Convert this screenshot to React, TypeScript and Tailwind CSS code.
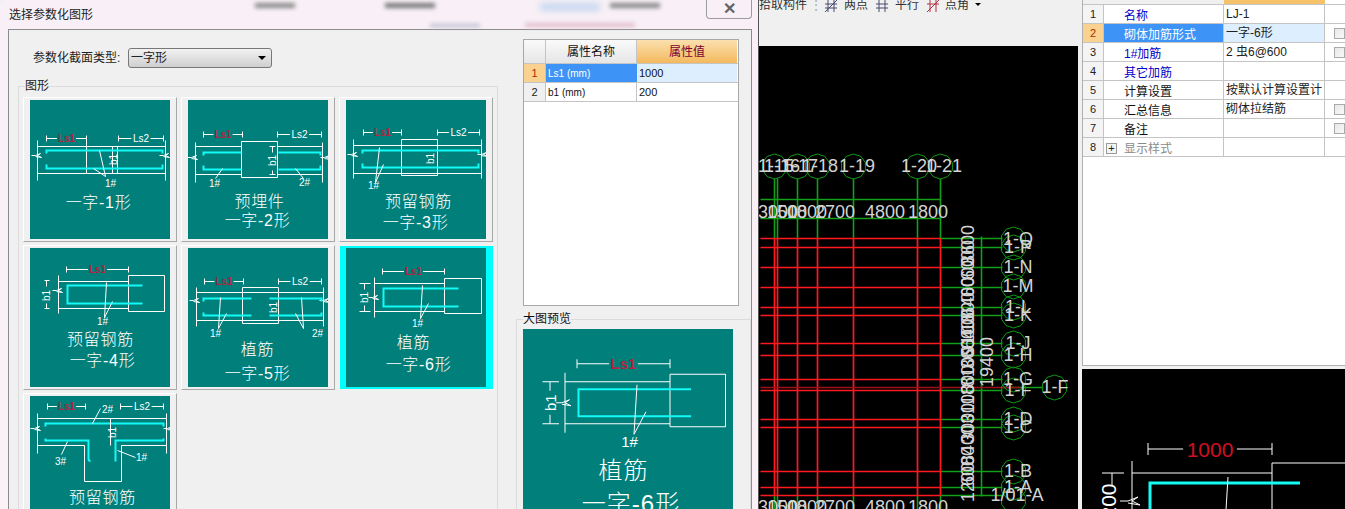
import React from "react";

const WHITE = "#ffffff";
const RED = "#b02440";
const CYAN = "#14fbf5";

function L({ d, c = WHITE, w = 1 }: { d: string; c?: string; w?: number }) {
  return <path d={d} fill="none" stroke={c} strokeWidth={w} vectorEffect="non-scaling-stroke" />;
}

function T({ x, y, s = 10, c = WHITE, rot, bold, children }: { x: number; y: number; s?: number; c?: string; rot?: boolean; bold?: boolean; children: React.ReactNode }) {
  return (
    <text
      x={x}
      y={y}
      fontSize={s}
      fill={c}
      fontWeight={bold ? 700 : undefined}
      textAnchor="middle"
      dominantBaseline="central"
      transform={rot ? `rotate(-90 ${x} ${y})` : undefined}
    >
      {children}
    </text>
  );
}

// dimension line with ticks and a label in the gap
function Dim({ a, b, y, label, red, s = 10 }: { a: number; b: number; y: number; label: string; red?: boolean; s?: number }) {
  const m = (a + b) / 2;
  const g = label.length * s * 0.32;
  return (
    <g>
      <L d={`M${a} ${y - 3}V${y + 3}M${b} ${y - 3}V${y + 3}M${a} ${y}H${m - g}M${m + g} ${y}H${b}`} />
      <T x={m} y={y} s={s} c={red ? RED : WHITE} bold={red}>{label}</T>
    </g>
  );
}

function Brk({ x, y }: { x: number; y: number }) {
  return <L d={`M${x - 5} ${y}H${x - 1}L${x + 4} ${y - 2}L${x + 1} ${y}L${x + 5} ${y + 2}L${x - 1} ${y + 1}`} />;
}

function Cap({ lines }: { lines: [string, number, number][] }) {
  return (
    <g letterSpacing={0.7} fontWeight={300}>
      {lines.map(([t, cx, cy]) => (
        <T key={t} x={cx} y={cy} s={16}>{t}</T>
      ))}
    </g>
  );
}

function D1() {
  return (
    <>
      <Dim a={16} b={56} y={38} label="Ls1" red />
      <Dim a={88} b={133} y={38} label="Ls2" />
      <L d="M7 46H135M7 73H135M7 40V80M135 40V80M56 36V73M82 46V73M87 46V73" />
      <Brk x={6} y={55} /><Brk x={134} y={55} />
      <L c={CYAN} w={2} d="M16 53V50H132V53M16 64V68H132V64" />
      <L d="M69 50L75 76L63 68" />
      <T x={80} y={83}>1#</T>
      <T x={83} y={59} rot>b1</T>
      <Cap lines={[["一字-1形", 68, 102]]} />
    </>
  );
}

function D2() {
  return (
    <>
      <Dim a={15} b={54} y={34} label="Ls1" red />
      <Dim a={89} b={133} y={34} label="Ls2" />
      <L d="M53 41H89V77H53ZM7 46H53M89 46H134M7 74H53M89 74H134M7 42V82M134 42V82" />
      <Brk x={4} y={57} /><Brk x={137} y={57} />
      <L c={CYAN} w={2} d="M15 55V52H53M15 65V69H53M132 55V52H90M132 65V69H90" />
      <L d="M34 68L27 78M107 68L115 78M81 46H87M81 74H87M84 46V52M84 70V74" />
      <T x={26} y={83}>1#</T><T x={116} y={82}>2#</T>
      <T x={84} y={60} rot>b1</T>
      <Cap lines={[["预埋件", 71, 101], ["一字-2形", 69, 120]]} />
    </>
  );
}

function D3() {
  return (
    <>
      <Dim a={17} b={55} y={32} label="Ls1" red />
      <Dim a={91} b={133} y={32} label="Ls2" />
      <L d="M55 39H91V75H55ZM7 45H135M7 73H135M7 39V78M135 39V78" />
      <Brk x={6} y={54} /><Brk x={136} y={54} />
      <L c={CYAN} w={2} d="M16 53V50H132V53M16 63V67H132V63" />
      <L d="M33 47L29 82L37 64" />
      <T x={27} y={85}>1#</T>
      <T x={84} y={58} rot>b1</T>
      <Cap lines={[["预留钢筋", 72, 101], ["一字-3形", 69, 122]]} />
    </>
  );
}

function D4() {
  return (
    <>
      <Dim a={36} b={98} y={21} label="Ls1" red />
      <L d="M98 27H134V63H98ZM28 33H98M28 60H98M28 27V65M14 32H19M14 60H19M16 32V38M16 55V60" />
      <Brk x={27} y={42} />
      <L c={CYAN} w={2} d="M112 37H37V55H112" />
      <L d="M76 34L74 69L82 53" />
      <T x={72} y={73}>1#</T>
      <T x={16} y={47} rot>b1</T>
      <Cap lines={[["预留钢筋", 70, 91], ["一字-4形", 72, 112]]} />
    </>
  );
}

function D5() {
  return (
    <>
      <Dim a={16} b={55} y={33} label="Ls1" red />
      <Dim a={90} b={133} y={33} label="Ls2" />
      <L d="M54 39H90V75H54ZM8 44H135M8 72H135M8 39V78M135 39V78" />
      <Brk x={6} y={52} /><Brk x={136} y={52} />
      <L c={CYAN} w={2} d="M15 53V50H63M15 64V67H63M133 53V50H81M133 64V67H81" />
      <L d="M32 49L30 80L38 65M113 49L115 80L107 65" />
      <T x={27} y={85}>1#</T><T x={129} y={85}>2#</T>
      <T x={85} y={59} rot>b1</T>
      <Cap lines={[["植筋", 69, 101], ["一字-5形", 69, 125]]} />
    </>
  );
}

function D6({ ls = "Ls1", bt = "b1", caption = true, s = 10, redC, bx = 18, cw = 2, bold = true }: { ls?: string; bt?: string; caption?: boolean; s?: number; redC?: string; bx?: number; cw?: number; bold?: boolean }) {
  const m = 67;
  const g = ls.length * s * 0.32;
  return (
    <>
      <L d={`M36 20V26M98 20V26M36 23H${m - g}M${m + g} 23H98`} />
      <T x={m} y={23} s={s} c={redC ?? RED} bold={bold}>{ls}</T>
      <L d="M98 30H135V65H98ZM28 35H98M28 63H98M28 29V69M13 35H24M13 63H24M18 35V41M18 57V63" />
      <Brk x={27} y={49} />
      <L c={CYAN} w={cw} d="M112 40H37V58H112" />
      <L d="M76 37L74 70L82 55" />
      <T x={71} y={75}>1#</T>
      <T x={bx} y={49} s={s} rot>{bt}</T>
      {caption && <Cap lines={[["植筋", 67, 94], ["一字-6形", 72, 116]]} />}
    </>
  );
}

function D7() {
  return (
    <>
      <Dim a={17} b={55} y={10} label="Ls1" red />
      <Dim a={90} b={133} y={10} label="Ls2" />
      <L d="M7 22H136M7 49H54V85H91V49H136M7 17V57M136 17V57" />
      <Brk x={5} y={32} /><Brk x={138} y={32} />
      <L c={CYAN} w={2} d="M15 30V27H133V30M15 42V44H58V62Q58 65 60 64M133 42V44H85V65" />
      <L d="M62 27L70 12M37 45L31 58M87 54L105 61M80 22V49" />
      <T x={77} y={13}>2#</T><T x={30} y={65}>3#</T><T x={111} y={61}>1#</T>
      <T x={82} y={36} rot>b1</T>
      <Cap lines={[["预留钢筋", 72, 101], ["一字-7形", 72, 122]]} />
    </>
  );
}

const cards = [D1, D2, D3, D4, D5, D6, D7];

function Cell({ i }: { i: number }) {
  const Draw = cards[i];
  const sel = i === 5;
  return (
    <div
      className={
        sel
          ? "bg-[#00ffff] ml-px my-px pl-[6px] pr-[8px] pt-[2px] pb-[2px] w-[153px] h-[143px]"
          : "bg-[#f0f0f0] border-t border-l border-t-white border-l-white border-r border-b border-r-[#a8a8a8] border-b-[#a8a8a8] pl-[6px] pt-[2px] w-[154px] h-[145px]"
      }
    >
      <svg width={140} height={139} viewBox="0 0 140 139" className="bg-[#007f7b] block">
        <g transform="translate(.5 .5)">
          <Draw />
        </g>
      </svg>
    </div>
  );
}

function Hex({ x, y }: { x: number; y: number }) {
  const r = 12.5;
  const pts = Array.from({ length: 10 }, (_, k) => {
    const a = (Math.PI / 5) * k - Math.PI / 2;
    return `${x + r * Math.cos(a)},${y + r * Math.sin(a)}`;
  }).join(" ");
  return <polygon points={pts} fill="none" stroke="#0f9a18" strokeWidth={1} />;
}

const vx = [774, 777, 797, 817, 853, 917, 940];
const hy = [238, 247, 267, 287, 307, 315, 343, 355, 379, 390, 419, 427, 471, 487, 495];
const rowLabels: [string, number][] = [
  ["1-Q", 239], ["1-P", 247], ["1-N", 267], ["1-M", 286], ["1-L", 307], ["1-K", 315], ["1-J", 343], ["1-H", 355],
  ["1-G", 379], ["1-F", 390], ["1-D", 419], ["1-C", 427], ["1-B", 471], ["1-A", 487],
];
const colLabels: [string, number][] = [
  ["1-15", 776], ["1-16", 782], ["1-17", 800], ["1-18", 820], ["1-19", 857], ["1-20", 919], ["1-21", 944],
];
const dimTop: [string, number][] = [
  ["3000", 778], ["1500", 787], ["1800", 807], ["2700", 835], ["4800", 885], ["1800", 928],
];
const sideDims: [string, number][] = [
  ["3600", 245], ["6000", 260], ["6000", 277], ["6400", 297], ["1800", 312], ["6400", 329], ["3600", 349],
  ["9100", 335], ["8100", 367], ["1800", 385], ["3100", 404], ["3000", 423], ["8400", 445], ["6000", 466], ["1200", 482],
];

function Cad() {
  const grey = "#d4d4d4";
  return (
    <svg viewBox="759 46 319 463" width={319} height={463} className="block bg-black">
      <g transform="translate(.5 .5)">
        <g stroke="#12a01a" strokeWidth={1.6}>
          {vx.map((x) => <line key={x} x1={x} x2={x} y1={178} y2={238} />)}
          {vx.map((x) => <line key={x} x1={x} x2={x} y1={495} y2={509} />)}
          {hy.map((y) => <line key={y} x1={940} x2={1002} y1={y} y2={y} />)}
          <line x1={760} x2={940} y1={199} y2={199} />
          <line x1={760} x2={940} y1={218} y2={218} />
          <line x1={981} x2={981} y1={236} y2={496} />
          <line x1={1001} x2={1042} y1={387} y2={387} />
        </g>
        <g stroke="#ff1820" strokeWidth={1.7}>
          {vx.map((x) => <line key={x} x1={x} x2={x} y1={238} y2={495} />)}
          {hy.map((y) => <line key={y} x1={760} x2={940} y1={y} y2={y} />)}
          <line x1={760} x2={1020} y1={387} y2={387} stroke="#a01018" />
        </g>
        {[774, 797, 817, 853, 917, 940].map((x) => <Hex key={x} x={x} y={166} />)}
        {rowLabels.map(([t, y]) => <Hex key={t} x={1013} y={y} />)}
        <Hex x={1054} y={387} />
        <Hex x={1013} y={500} />
      </g>
      <g fill={grey} fontSize={18} dominantBaseline="central" textAnchor="middle">
        {colLabels.map(([t, x]) => <text key={t} x={x} y={166}>{t}</text>)}
        {dimTop.map(([t, x], i) => <text key={i} x={x} y={212}>{t}</text>)}
        {dimTop.map(([t, x], i) => <text key={i} x={x} y={507}>{t}</text>)}
        {rowLabels.map(([t, y]) => <text key={t} x={1018} y={y}>{t}</text>)}
        <text x={1055} y={387}>1-F</text>
        <text x={1017} y={495}>1/01-A</text>
        <text x={987} y={362} transform="rotate(-90 987 362)">19400</text>
        {sideDims.map(([t, y], i) => <text key={i} x={968} y={y} transform={`rotate(-90 968 ${y})`}>{t}</text>)}
      </g>
    </svg>
  );
}

const sideRows = [
  { n: "1", name: "名称", val: "LJ-1", c: "text-[#0000c8]" },
  { n: "2", name: "砌体加筋形式", val: "一字-6形", c: "text-white bg-[#3d94f6]", sel: true, box: true },
  { n: "3", name: "1#加筋", val: "2 虫6@600", c: "text-[#0000c8]", box: true },
  { n: "4", name: "其它加筋", val: "", c: "text-[#0000c8]" },
  { n: "5", name: "计算设置", val: "按默认计算设置计", c: "text-[#111]" },
  { n: "6", name: "汇总信息", val: "砌体拉结筋", c: "text-[#111]", box: true },
  { n: "7", name: "备注", val: "", c: "text-[#111]", box: true },
  { n: "8", name: "显示样式", val: "", c: "text-[#8a8a8a]", plus: true },
];

function PropTable() {
  return (
    <div className="w-[216px] h-[267px] bg-white border border-[#a8a8a8] text-[12px]">
      <div className="flex h-[24px] border-b border-[#c4c4c4]">
        <div className="w-[22px] bg-gradient-to-b from-[#fafafa] to-[#e6e6e6] border-r border-[#c4c4c4]" />
        <div className="w-[91px] flex items-center justify-center bg-gradient-to-b from-[#fafafa] to-[#e6e6e6] border-r border-[#c4c4c4] text-[#111]">属性名称</div>
        <div className="w-[100px] flex items-center justify-center bg-gradient-to-b from-[#fbe0ae] to-[#f3b95c] text-[#7a0030]">属性值</div>
      </div>
      <div className="flex h-[19px] border-b border-[#c4c4c4]">
        <div className="w-[22px] flex items-center justify-center bg-[#fbd18f] border-r border-[#c4c4c4] text-[#a03000] text-[11px]">1</div>
        <div className="w-[91px] flex items-center pl-[2px] bg-[#3d94f6] text-white text-[10px]">Ls1 (mm)</div>
        <div className="w-[100px] flex items-center pl-[2px] bg-[#ddeeff] text-[11px] text-[#111]">1000</div>
      </div>
      <div className="flex h-[19px] border-b border-[#c4c4c4]">
        <div className="w-[22px] flex items-center justify-center bg-[#f0f0f0] border-r border-[#c4c4c4] text-[#222] text-[11px]">2</div>
        <div className="w-[91px] flex items-center pl-[2px] border-r border-[#c4c4c4] text-[10px] text-[#111]">b1 (mm)</div>
        <div className="w-[100px] flex items-center pl-[2px] text-[11px] text-[#111]">200</div>
      </div>
    </div>
  );
}

function Dialog() {
  return (
    <div className="w-[759px] h-[509px] shrink-0 rounded-tl-[6px] bg-gradient-to-b from-[#f8f0f6] to-[#fbf1f6] border-r border-[#555] overflow-hidden flex flex-col">
      <div className="relative h-[29px] shrink-0 flex items-center pl-[9px] text-[12px] text-[#222]">
        选择参数化图形
        <span className="absolute left-[255px] top-[3px] w-[40px] h-[5px] bg-[#8a8a8a] blur-[2px]" />
        <span className="absolute left-[385px] top-[3px] w-[50px] h-[5px] bg-[#777] blur-[2px]" />
        <span className="absolute left-[540px] top-[3px] w-[60px] h-[8px] bg-[#c8d8f0] blur-[3px]" />
        <span className="absolute left-[610px] top-[3px] w-[50px] h-[5px] bg-[#888] blur-[2px]" />
        <span className="absolute left-[430px] top-[24px] w-[50px] h-[3px] bg-[#b8b8cc] blur-[2px]" />
        <span className="absolute left-[525px] top-[23px] w-[110px] h-[4px] bg-[#e0bcc8] blur-[2px]" />
        <div className="absolute left-[706px] top-0 w-[46px] h-[19px] rounded-b-[4px] border border-t-0 border-[#9a9aa0] flex items-center justify-center text-[16px] leading-none font-bold text-[#666]">
          ✕
        </div>
      </div>
      <div className="ml-[8px] w-[744px] flex-1 bg-[#f0f0f0] border border-[#8c8c8c] border-b-0 flex min-h-0">
        <div className="w-[507px] shrink-0 pl-[9px]">
          <div className="flex items-center h-[20px] mt-[18px] pl-[15px] text-[12px] text-[#222]">
            <span className="w-[95px]">参数化截面类型:</span>
            <div className="w-[144px] h-[20px] rounded-[3px] border border-[#777] bg-gradient-to-b from-[#f2f2f2] to-[#cfcfcf] flex items-center justify-between pl-[2px] pr-[5px]">
              一字形
              <span className="w-0 h-0 border-x-[4px] border-x-transparent border-t-[4px] border-t-black" />
            </div>
          </div>
          <fieldset className="mt-[11px] border border-[#dcdcdc] border-b-0 w-[480px] h-[440px] px-[4px]">
            <legend className="ml-[2px] text-[12px] leading-[14px] text-[#222]">图形</legend>
            <div className="grid grid-cols-[154px_154px_154px] auto-rows-[145px] gap-x-[4px] gap-y-[3px] mt-[4px]">
              {cards.map((_, i) => <Cell key={i} i={i} />)}
            </div>
          </fieldset>
        </div>
        <div className="flex-1 min-w-0 pt-[9px] pl-[7px]">
          <PropTable />
          <fieldset className="mt-[6px] -ml-[7px] w-[235px] h-[200px] border border-[#dcdcdc] border-b-0 pl-[6px]">
            <legend className="text-[12px] leading-[14px] text-[#111]">大图预览</legend>
            <svg width={210} height={209} viewBox="0 0 140 139" className="bg-[#007f7b] block mt-[3px]">
              <D6 />
            </svg>
          </fieldset>
        </div>
      </div>
    </div>
  );
}

function Middle() {
  return (
    <div className="w-[322px] h-[509px] shrink-0 flex flex-col bg-[#f0f0f0]">
      <div className="h-[46px] shrink-0 overflow-hidden flex items-start gap-[6px] -mt-[2px] text-[12px] text-[#333] leading-[14px] whitespace-nowrap">
        <span>拾取构件</span>
        <span className="text-[#aaa] w-[5px] -ml-[3px]">⋮</span>
        <svg width={14} height={14} viewBox="0 0 14 14" className="ml-[3px] mt-[1px]"><path d="M4 1V13M10 1V13M1 5H13M1 9H13M1 13L13 1" fill="none" stroke="#4a4a70" /></svg>
        <span>两点</span>
        <svg width={14} height={14} viewBox="0 0 14 14" className="ml-[1px] mt-[1px]"><path d="M4 1V13M10 1V13M1 5H13M1 9H13" fill="none" stroke="#4a4a70" /></svg>
        <span>平行</span>
        <svg width={16} height={14} viewBox="0 0 16 14" className="ml-[1px] mt-[1px]"><path d="M4 1V13M10 1V13M1 5H13M1 13L13 1" fill="none" stroke="#b03040" /></svg>
        <span className="-ml-[3px]">点角</span>
        <span className="w-0 h-0 mt-[5px] border-x-[3px] border-x-transparent border-t-[3px] border-t-black" />
      </div>
      <div className="mt-[2px]"><Cad /></div>
    </div>
  );
}

function Side() {
  return (
    <div className="flex-1 min-w-0 h-[509px] flex flex-col bg-[#f0f0f0]">
      <div className="h-[366px] shrink-0 ml-[1px] bg-white border-l border-b border-[#b0b0b0] text-[12px]">
        <div className="h-[5px] flex border-b border-[#c4c4c4]">
          <div className="w-[21px] bg-[#f0f0f0]" />
          <div className="w-[120px] bg-[#f0f0f0]" />
          <div className="w-[101px] bg-[#f5c26b]" />
        </div>
        {sideRows.map((r) => (
          <div key={r.n} className="flex h-[19px] border-b border-[#c4c4c4]">
            <div className={`w-[21px] shrink-0 flex items-center justify-center border-r border-[#c4c4c4] text-[11px] ${r.sel ? "bg-[#fbd18f] text-[#a03000]" : "bg-[#f4f4f4] text-[#222]"}`}>{r.n}</div>
            <div className={`w-[120px] shrink-0 flex items-center pt-[3px] border-r border-[#c4c4c4] ${r.plus ? "pl-[2px]" : "pl-[20px]"} ${r.c}`}>
              {r.plus && (
                <span className="w-[11px] h-[11px] mr-[7px] border border-[#999] bg-[#f4f4f4] flex items-center justify-center text-[11px] leading-none text-[#222]">+</span>
              )}
              {r.name}
            </div>
            <div className={`w-[101px] shrink-0 flex items-center pl-[2px] border-r border-[#c4c4c4] whitespace-nowrap overflow-hidden text-[#222] ${r.sel ? "bg-[#ddeeff]" : ""}`}>{r.val}</div>
            <div className="flex-1 flex items-center pl-[9px] overflow-hidden">
              {r.box && <span className="w-[11px] h-[11px] shrink-0 border border-[#aaa] bg-gradient-to-br from-[#e8e8e8] to-[#f8f8f8]" />}
            </div>
          </div>
        ))}
      </div>
      <div className="flex-1 mt-[3px] ml-[1px] min-h-0 overflow-hidden">
        <svg width={263} height={140} viewBox="3 -17 131.5 70" className="block bg-black">
          <D6 ls="1000" bt="200" caption={false} s={10.5} redC="#d01020" bx={16} cw={3} bold={false} />
        </svg>
      </div>
    </div>
  );
}

export default function App() {
  return (
    <div className="w-[1345px] h-[509px] overflow-hidden flex bg-[#f0f0f0] font-['Liberation_Sans','Noto_Sans_CJK_SC',sans-serif]">
      <Dialog />
      <Middle />
      <Side />
    </div>
  );
}
